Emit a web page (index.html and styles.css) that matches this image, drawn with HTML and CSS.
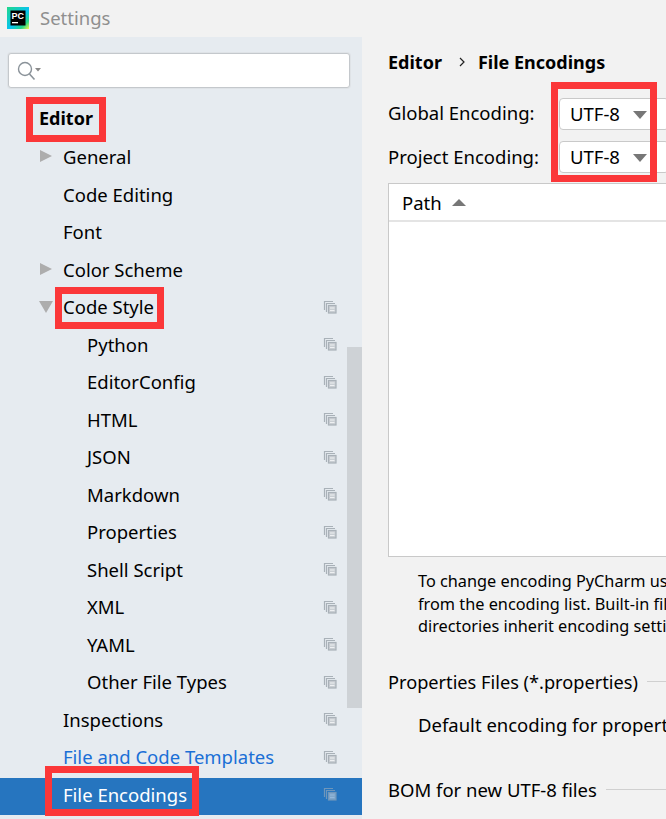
FILE: index.html
```html
<!DOCTYPE html>
<html lang="en">
<head>
<meta charset="utf-8">
<title>Settings</title>
<link rel="stylesheet" href="styles.css">
</head>
<body>
<div class="window">
  <header class="titlebar">
    <svg class="logo" width="22" height="22" viewBox="0 0 22 22">
      <defs><linearGradient id="lg" x1="0" y1="0" x2="1" y2="1"><stop offset="0" stop-color="#21d789"/><stop offset="0.55" stop-color="#07c3f2"/><stop offset="0.8" stop-color="#21d789"/><stop offset="1" stop-color="#fcf84a"/></linearGradient></defs>
      <rect width="22" height="22" fill="url(#lg)"/>
      <rect x="3.500" y="3.500" width="15" height="15" fill="#000"/>
      <rect x="5" y="15" width="6" height="1.300" fill="#fff"/>
      <text x="4.500" y="11.500" class="logo-text">PC</text>
    </svg>
    <span class="title">Settings</span>
  </header>
  <div class="body">
    <aside class="sidebar">
      <div class="search">
        <svg width="28" height="22" viewBox="0 0 28 22"><circle cx="9" cy="9" r="6.500" fill="none" stroke="#8a9299" stroke-width="1.400"/><path d="M13.500 14 18.500 19.500" stroke="#8a9299" stroke-width="1.600"/><path d="M19 8h6l-3 3.500z" fill="#8a8a8a"/></svg>
      </div>
      <div class="heading-row">Editor</div>
      <ul class="tree">
        <li class="row l1"><span class="arrow right"></span>General</li>
        <li class="row l1">Code Editing</li>
        <li class="row l1">Font</li>
        <li class="row l1"><span class="arrow right"></span>Color Scheme</li>
        <li class="row l1"><span class="arrow down"></span>Code Style<svg class="copy" viewBox="0 0 14 14"><use href="#copy"/></svg></li>
        <li class="row l2">Python<svg class="copy" viewBox="0 0 14 14"><use href="#copy"/></svg></li>
        <li class="row l2">EditorConfig<svg class="copy" viewBox="0 0 14 14"><use href="#copy"/></svg></li>
        <li class="row l2">HTML<svg class="copy" viewBox="0 0 14 14"><use href="#copy"/></svg></li>
        <li class="row l2">JSON<svg class="copy" viewBox="0 0 14 14"><use href="#copy"/></svg></li>
        <li class="row l2">Markdown<svg class="copy" viewBox="0 0 14 14"><use href="#copy"/></svg></li>
        <li class="row l2">Properties<svg class="copy" viewBox="0 0 14 14"><use href="#copy"/></svg></li>
        <li class="row l2">Shell Script<svg class="copy" viewBox="0 0 14 14"><use href="#copy"/></svg></li>
        <li class="row l2">XML<svg class="copy" viewBox="0 0 14 14"><use href="#copy"/></svg></li>
        <li class="row l2">YAML<svg class="copy" viewBox="0 0 14 14"><use href="#copy"/></svg></li>
        <li class="row l2">Other File Types<svg class="copy" viewBox="0 0 14 14"><use href="#copy"/></svg></li>
        <li class="row l1">Inspections<svg class="copy" viewBox="0 0 14 14"><use href="#copy"/></svg></li>
        <li class="row l1 link">File and Code Templates<svg class="copy" viewBox="0 0 14 14"><use href="#copy"/></svg></li>
        <li class="row l1 selected">File Encodings<svg class="copy" viewBox="0 0 14 14"><use href="#copy"/></svg></li>
      </ul>
      <div class="scrollbar"></div>
    </aside>
    <main class="content">
      <div class="crumbs"><b>Editor</b><svg class="chev" width="8" height="10" viewBox="0 0 8 10"><path d="M2 1l4 4-4 4" fill="none" stroke="#222" stroke-width="1.200"/></svg><b>File Encodings</b></div>
      <div class="enc-row"><span class="enc-label">Global Encoding:</span><span class="combo">UTF-8<i class="caret"></i></span></div>
      <div class="enc-row second"><span class="enc-label">Project Encoding:</span><span class="combo">UTF-8<i class="caret"></i></span></div>
      <div class="table">
        <div class="thead">Path<i class="sort"></i></div>
      </div>
      <p class="note">To change encoding PyCharm uses for a file, right-click it and select the encoding<br>from the encoding list. Built-in file types use their default encoding, and<br>directories inherit encoding settings from parent directories in the project</p>
      <div class="section first"><span>Properties Files (*.properties)</span><hr></div>
      <div class="prop">Default encoding for properties files:</div>
      <div class="section bom"><span>BOM for new UTF-8 files</span><hr></div>
    </main>
  </div>
  <div class="mark m-editor"></div>
  <div class="mark m-style"></div>
  <div class="mark m-file"></div>
  <div class="mark m-utf"></div>
</div>
<svg class="defs" width="0" height="0"><defs><g id="copy" fill="none" stroke="#a9b1b8" stroke-width="1.200"><path d="M1.500 10V1.500H10"/><path d="M3.500 12V3.500H12"/><rect x="5.500" y="5.500" width="7.500" height="7.500" fill="#c9ced3"/><path d="M7 8h4.500M7 10.500h4.500" stroke="#eef0f2"/></g></defs></svg>
</body>
</html>
```
FILE: styles.css
```css
* { box-sizing: border-box; }
html, body { margin: 0; padding: 0; }
body { width: 666px; height: 819px; overflow: hidden; font-family: "Noto Sans", "Open Sans", sans-serif; font-size: 18.500px; color: #000; background: #f2f2f2; }
.window { position: relative; width: 666px; height: 819px; overflow: hidden; }
.titlebar { height: 37px; display: flex; align-items: center; padding-left: 7px; gap: 11px; background: #f2f2f2; }
.logo { display: block; margin-top: -2px; }
.logo-text { font-family: "Liberation Sans", sans-serif; font-size: 9px; font-weight: 700; fill: #fff; }
.title { color: #8f8f8f; font-size: 18.500px; margin-top: -3px; }
.body { display: flex; height: 782px; }
.sidebar { position: relative; width: 362px; flex: none; background: #e6ebf0; padding-top: 16px; }
.search { margin-left: 8px; width: 342px; height: 35px; background: #fff; border: 1px solid #c4c8cc; border-radius: 3px; display: flex; align-items: center; padding-left: 7px; box-shadow: 0 0 0 1px #dfe3e7; }
.heading-row { height: 37px; line-height: 37px; margin-top: 12px; padding-left: 39px; font-weight: 700; font-size: 18px; }
.tree { list-style: none; margin: 3px 0 0; padding: 0; }
.row { position: relative; height: 37.500px; line-height: 33.500px; white-space: nowrap; }
.l1 { padding-left: 63px; }
.l2 { padding-left: 87px; }
.link { color: #1a6fd6; }
.selected { background: #2675bf; color: #fff; line-height: 33px; }
.selected .copy { opacity: 0.55; }
.arrow { position: absolute; width: 0; height: 0; }
.arrow.right { left: 40px; top: 10px; border-left: 12px solid #adadad; border-top: 6.500px solid transparent; border-bottom: 6.500px solid transparent; }
.arrow.down { left: 39px; top: 11px; border-top: 12px solid #adadad; border-left: 7px solid transparent; border-right: 7px solid transparent; }
.copy { position: absolute; left: 323px; top: 9.500px; width: 14px; height: 14px; }
.scrollbar { position: absolute; left: 347px; top: 310px; width: 15px; height: 361px; background: #ced2d6; }
.content { flex: 1; min-width: 0; padding-left: 26px; overflow: hidden; }
.crumbs { display: flex; align-items: center; height: 28px; margin-top: 11px; font-size: 18px; white-space: nowrap; }
.chev { margin: 0 12px 0 16px; }
.enc-row { display: flex; align-items: center; height: 34px; margin-top: 21px; white-space: nowrap; }
.enc-row.second { margin-top: 9px; }
.enc-label { width: 171px; flex: none; padding-bottom: 3px; }
.second .enc-label { padding-bottom: 1px; }
.combo { position: relative; width: 110px; flex: none; height: 32px; line-height: 30px; background: #fff; border: 1px solid #c9c9c9; border-radius: 4px; padding-left: 10px; }
.caret { position: absolute; left: 73px; top: 12px; width: 0; height: 0; border-top: 8px solid #777; border-left: 7px solid transparent; border-right: 7px solid transparent; }
.table { width: 300px; height: 374px; margin-top: 9px; background: #fff; border: 1px solid #c9c9c9; border-right: 0; }
.thead { height: 38px; line-height: 37px; padding-left: 13px; border-bottom: 2px solid #e4e4e4; position: relative; }
.sort { position: absolute; left: 63px; top: 15px; width: 0; height: 0; border-bottom: 7px solid #777; border-left: 7px solid transparent; border-right: 7px solid transparent; }
.note { margin: 13px 0 0 30px; font-size: 16.300px; line-height: 22.500px; white-space: nowrap; }
.section { display: flex; align-items: center; gap: 9px; width: 300px; white-space: nowrap; }
.section hr { flex: 1; height: 1px; margin: 0; border: 0; background: #d0d0d0; }
.section.first { margin-top: 31px; height: 26px; font-size: 18.200px; }
.prop { margin: 17px 0 0 30px; height: 26px; line-height: 26px; white-space: nowrap; }
.section.bom { margin-top: 39px; height: 26px; }
.mark { position: absolute; border: 7px solid #fb3739; }
.m-editor { left: 26px; top: 97px; width: 80px; height: 45px; }
.m-style { left: 55px; top: 287px; width: 109px; height: 42px; }
.m-file { left: 45px; top: 766px; width: 154px; height: 50px; }
.m-utf { left: 551px; top: 82px; width: 106px; height: 100px; }
.defs { position: absolute; }
```
